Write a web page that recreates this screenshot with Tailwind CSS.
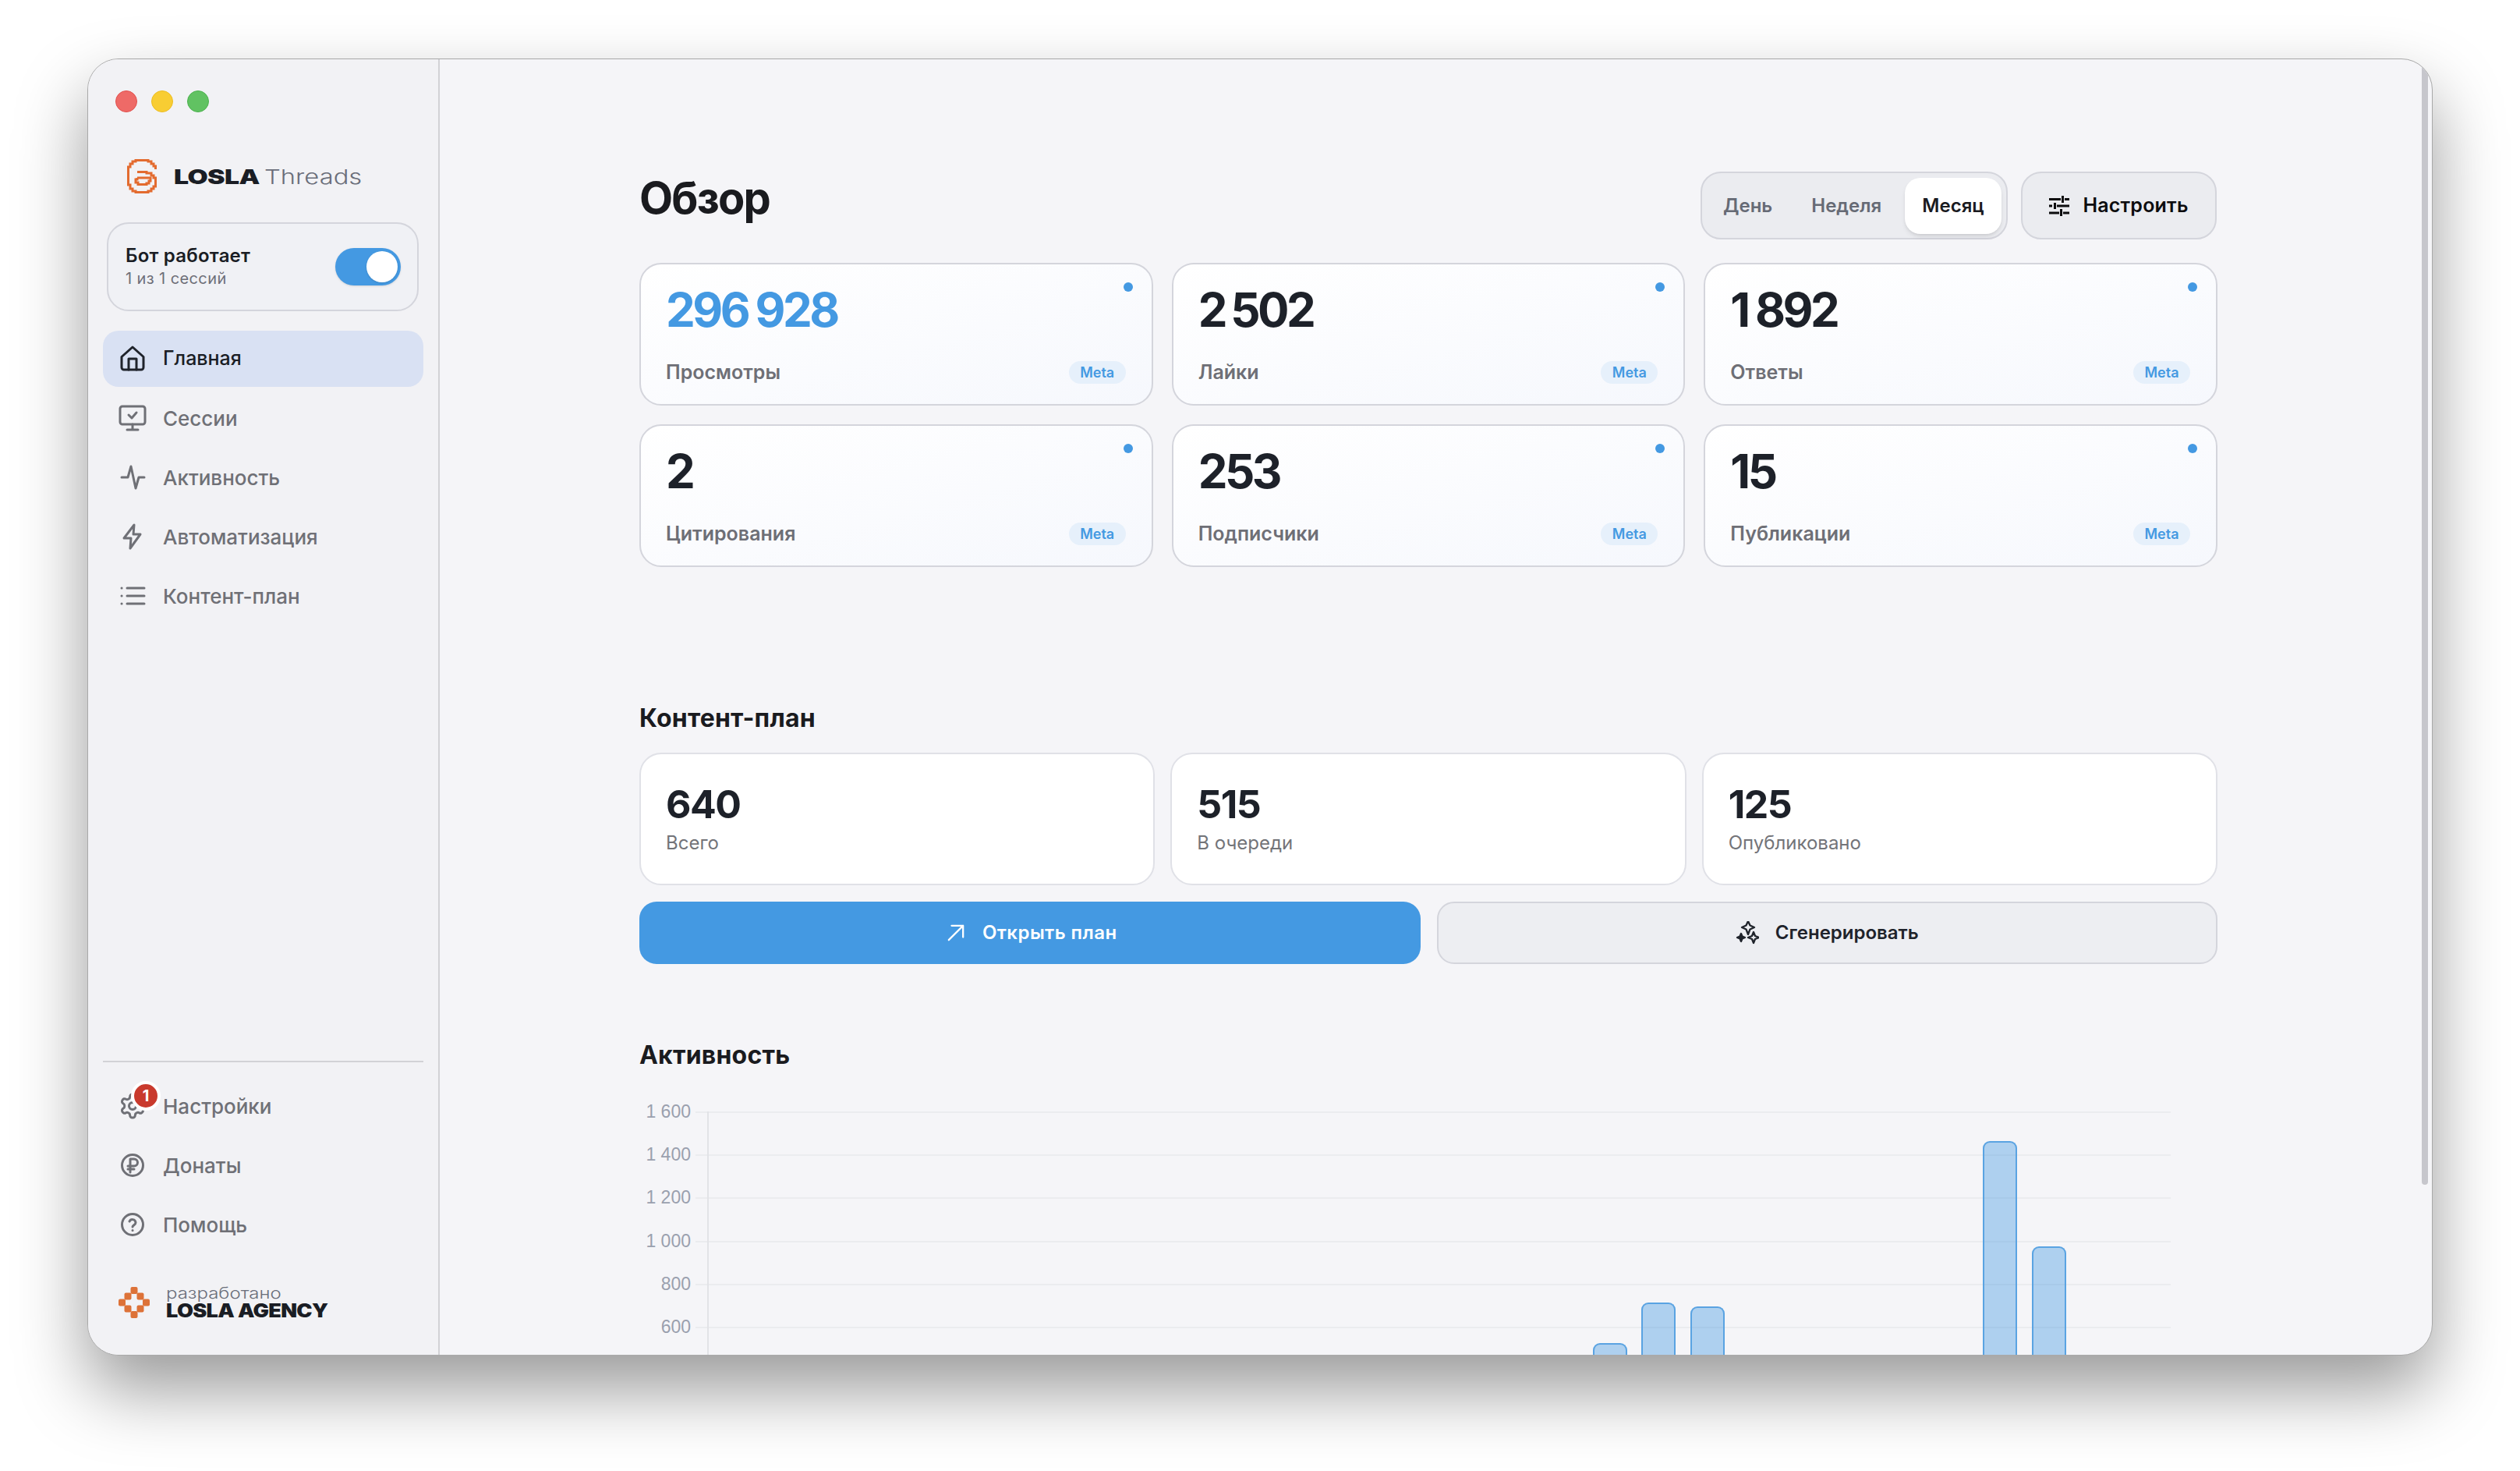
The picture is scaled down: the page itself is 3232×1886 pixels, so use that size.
<!DOCTYPE html>
<html lang="ru">
<head>
    <meta charset="UTF-8">
    <title>LOSLA Threads</title>
    <script src="https://cdn.jsdelivr.net/npm/@tailwindcss/browser@4"></script>
</head>
<body class="bg-white font-['Inter',sans-serif] antialiased overflow-hidden">
<div class="w-[3232px] h-[1886px] pt-[75px] pl-[112px]">
    <!-- Window -->
    <div class="relative w-[3008px] h-[1663px] rounded-[40px] overflow-hidden border border-[#a9a9a9] bg-[#f5f5f8] flex shadow-[0_44px_90px_0_rgba(0,0,0,0.4)]">

        <!-- Sidebar -->
        <aside class="w-[451px] shrink-0 h-full bg-[#f2f2f5] border-r-2 border-[#d2d2d6] px-[19px] flex flex-col">
            <div class="flex gap-[18px] pt-[40px] pl-[16px]">
                <span class="w-[28px] h-[28px] rounded-full bg-[#ee6a67] border border-[#e2514e]"></span>
                <span class="w-[28px] h-[28px] rounded-full bg-[#f8cd33] border border-[#edbd22]"></span>
                <span class="w-[28px] h-[28px] rounded-full bg-[#61c262] border border-[#4db24f]"></span>
            </div>

            <!-- Logo -->
            <div class="flex items-center mt-[60px] pl-[31px] h-[44px]">
                <svg class="w-[38px] h-[44px] shrink-0" viewBox="0 0 38 44" fill="none" stroke="#e36b2f" stroke-width="3">
                    <path d="M36.500 13V9H34V6H31V3H27V1.500H11V3H7V6H4V10H1.500V33H4V38H7V41H11V42.500H27V41H31V38H34V35H36.500V24H34V21H31V18H25V16.500H13"/>
                    <path d="M13 24H30V28H28V31H25V32.500H14V30H11V26H13V24"/>
                </svg>
                <span class="ml-[22px] w-[85px] font-black text-[26px] leading-none text-[#1a1d24] tracking-[-0.5px] origin-left scale-x-[1.3] inline-block pt-[1px]">LOSLA</span>
                <span class="ml-[31px] font-light text-[26px] leading-none text-[#6a6e7a] origin-left scale-x-[1.26] inline-block pt-[2px]">Threads</span>
            </div>

            <!-- Bot status -->
            <div class="mt-[37px] ml-[5px] w-[400px] h-[114px] rounded-[28px] border-2 border-[#d4d5dc] bg-[#f0f1f5] flex items-center justify-between pl-[22px] pr-[21px]">
                <div>
                    <div class="text-[24px] leading-[28px] font-semibold tracking-[0.2px] text-[#1a1d24]">Бот работает</div>
                    <div class="text-[20px] leading-[26px] tracking-[0.4px] text-[#6e6f78] mt-[2px]">1 из 1 сессий</div>
                </div>
                <div class="relative w-[84px] h-[48px] rounded-full bg-[#4499e2] shadow-sm">
                    <span class="absolute right-[4px] top-[4px] w-[40px] h-[40px] rounded-full bg-white shadow"></span>
                </div>
            </div>

            <!-- Navigation -->
            <nav class="mt-[25px] flex flex-col gap-[4px] text-[26px] font-medium text-[#6f7076]">
                <a class="h-[72px] rounded-[20px] bg-[#d9e1f3] text-[#1a1d24] text-[25px] flex items-center gap-[21px] pl-[20px]">
                    <svg class="w-[36px] h-[36px]" viewBox="0 0 36 36" fill="none" stroke="#1f232b" stroke-width="3" stroke-linejoin="round" stroke-linecap="round">
                        <path d="M4 15.500 18 3l14 12.500V29a3 3 0 0 1-3 3H7a3 3 0 0 1-3-3Z"/><path d="M13 32V18h10v14"/>
                    </svg>
                    Главная
                </a>
                <a class="h-[72px] flex items-center gap-[21px] pl-[20px]">
                    <svg class="w-[36px] h-[36px]" viewBox="0 0 36 36" fill="none" stroke="#6f7076" stroke-width="3" stroke-linejoin="round" stroke-linecap="round">
                        <rect x="2" y="3" width="32" height="23" rx="3"/><path d="M18 26v6M11 33h14M13 14l4 4 6-7"/>
                    </svg>
                    Сессии
                </a>
                <a class="h-[72px] flex items-center gap-[21px] pl-[20px]">
                    <svg class="w-[36px] h-[36px]" viewBox="0 0 36 36" fill="none" stroke="#6f7076" stroke-width="3" stroke-linejoin="round" stroke-linecap="round">
                        <path d="M4 18h8l4-14 6 28 4-14h7"/>
                    </svg>
                    Активность
                </a>
                <a class="h-[72px] flex items-center gap-[21px] pl-[20px]">
                    <svg class="w-[36px] h-[36px]" viewBox="0 0 36 36" fill="none" stroke="#6f7076" stroke-width="3" stroke-linejoin="round" stroke-linecap="round">
                        <path d="M20 3 7 20h9l-1 13 13-18h-9Z"/>
                    </svg>
                    Автоматизация
                </a>
                <a class="h-[72px] flex items-center gap-[21px] pl-[20px]">
                    <svg class="w-[36px] h-[36px]" viewBox="0 0 36 36" fill="none" stroke="#6f7076" stroke-width="3" stroke-linecap="round">
                        <path d="M11 8h22M11 18h22M11 28h22"/><path d="M4 8h.1M4 18h.1M4 28h.1"/>
                    </svg>
                    Контент-план
                </a>
            </nav>

            <!-- Bottom navigation -->
            <div class="mt-auto border-t-2 border-[#d2d2d6] pt-[20px] flex flex-col gap-[4px] text-[26px] font-medium text-[#6f7076]">
                <a class="relative h-[72px] flex items-center gap-[21px] pl-[20px]">
                    <svg class="w-[36px] h-[36px]" viewBox="0 0 24 24" fill="none" stroke="#6f7076" stroke-width="2" stroke-linecap="round" stroke-linejoin="round">
                        <path d="M12.220 2h-.44a2 2 0 0 0-2 2v.18a2 2 0 0 1-1 1.730l-.43.25a2 2 0 0 1-2 0l-.15-.08a2 2 0 0 0-2.730.73l-.22.38a2 2 0 0 0 .73 2.730l.15.1a2 2 0 0 1 1 1.720v.51a2 2 0 0 1-1 1.740l-.15.09a2 2 0 0 0-.73 2.730l.22.38a2 2 0 0 0 2.730.73l.15-.08a2 2 0 0 1 2 0l.43.25a2 2 0 0 1 1 1.730V20a2 2 0 0 0 2 2h.44a2 2 0 0 0 2-2v-.18a2 2 0 0 1 1-1.730l.43-.25a2 2 0 0 1 2 0l.15.08a2 2 0 0 0 2.730-.73l.22-.39a2 2 0 0 0-.73-2.730l-.15-.08a2 2 0 0 1-1-1.740v-.5a2 2 0 0 1 1-1.740l.15-.09a2 2 0 0 0 .73-2.730l-.22-.38a2 2 0 0 0-2.730-.73l-.15.08a2 2 0 0 1-2 0l-.43-.25a2 2 0 0 1-1-1.730V4a2 2 0 0 0-2-2z"/><circle cx="12" cy="12" r="3"/>
                    </svg>
                    Настройки
                    <span class="absolute left-[36px] top-[4px] w-[38px] h-[38px] rounded-full bg-[#c93a2d] border-4 border-white flex items-center justify-center text-white text-[20px] font-bold leading-none">1</span>
                </a>
                <a class="h-[72px] flex items-center gap-[21px] pl-[20px]">
                    <svg class="w-[36px] h-[36px]" viewBox="0 0 36 36" fill="none" stroke="#6f7076" stroke-width="3" stroke-linecap="round" stroke-linejoin="round">
                        <circle cx="18" cy="18" r="13.500"/><path d="M15 27V10h5a4.500 4.500 0 0 1 0 9h-8M12 23h8"/>
                    </svg>
                    Донаты
                </a>
                <a class="h-[72px] flex items-center gap-[21px] pl-[20px]">
                    <svg class="w-[36px] h-[36px]" viewBox="0 0 36 36" fill="none" stroke="#6f7076" stroke-width="3" stroke-linecap="round" stroke-linejoin="round">
                        <circle cx="18" cy="18" r="13.500"/><path d="M14 14a4.200 4.200 0 0 1 8 1.400c0 2.800-4 3.600-4 5.600M18 25.500h.1"/>
                    </svg>
                    Помощь
                </a>
            </div>

            <!-- Agency mark -->
            <div class="flex items-center mt-[44px] mb-[47px] pl-[20px] h-[40px]">
                <svg class="w-[40px] h-[40px] shrink-0" viewBox="0 0 40 40" fill="#dd7238">
                    <rect x="15.500" y="0" width="9" height="9" rx="2"/><rect x="7.500" y="7.500" width="9" height="9" rx="2"/><rect x="23.500" y="7.500" width="9" height="9" rx="2"/>
                    <rect x="0" y="15.500" width="9" height="9" rx="2"/><rect x="31" y="15.500" width="9" height="9" rx="2"/>
                    <rect x="7.500" y="23.500" width="9" height="9" rx="2"/><rect x="23.500" y="23.500" width="9" height="9" rx="2"/><rect x="15.500" y="31" width="9" height="9" rx="2"/>
                </svg>
                <div class="ml-[21px]">
                    <div class="text-[20px] leading-[21px] font-light text-[#6a6e7a] origin-left scale-x-[1.2] w-[122px] whitespace-nowrap">разработано</div>
                    <div class="text-[24px] leading-[24px] font-black text-[#1a1d24] origin-left scale-x-[1.13] tracking-[-0.6px] w-[185px] whitespace-nowrap">LOSLA AGENCY</div>
                </div>
            </div>
        </aside>

        <!-- Main -->
        <main class="flex-1 h-full overflow-hidden pl-[256px] pt-[144px]">
            <div class="w-[2024px]">
                <header class="flex items-start justify-between h-[87px] pr-[1px]">
                    <h1 class="text-[56px] leading-[68px] font-bold tracking-[-1.8px] text-[#1a1b1f]">Обзор</h1>
                    <div class="flex gap-[17px]">
                        <div class="w-[394px] h-[87px] rounded-[26px] border-2 border-[#d4d5dc] bg-[#ebecf0] flex items-center pl-[27px] pr-[6px] text-[24px] font-semibold text-[#666a75]">
                            <span>День</span>
                            <span class="ml-[50px]">Неделя</span>
                            <span class="ml-auto w-[124px] h-[72px] rounded-[20px] bg-white text-[#1a1b1f] shadow-md flex items-center justify-center">Месяц</span>
                        </div>
                        <button class="w-[251px] h-[87px] rounded-[26px] border-2 border-[#d4d5dc] bg-[#ebecf0] flex items-center justify-center gap-[17px] text-[25px] font-semibold tracking-[0.2px] text-[#0d0d0f]">
                            <svg class="w-[26px] h-[26px]" viewBox="0 0 26 26" fill="none" stroke="#0d0d0f" stroke-width="3">
                                <path d="M0 4.500h15M20 4.500h6M17.500 0v9M0 13h4M10 13h16M7.500 9v8M0 22h13M18 22h8M15.500 17v9"/>
                            </svg>
                            Настроить
                        </button>
                    </div>
                </header>

                <!-- Metrics -->
                <section class="mt-[30px] grid grid-cols-3 gap-x-[24px] gap-y-[24px]">
                    <div class="relative h-[183px] rounded-[28px] border-2 border-[#d4d5dc] bg-linear-to-br from-white to-[#f6f8fd] pl-[32px] pr-[33px] pt-[22px]">
                        <span class="absolute right-[24px] top-[23px] w-[12px] h-[12px] rounded-full bg-[#4499e2]"></span>
                        <div class="text-[60px] leading-[72px] font-bold tracking-[-3.5px] text-[#4499e2]">296&#8202;<span class="ml-[8px]">928</span></div>
                        <div class="mt-[26px] flex items-center justify-between">
                            <span class="text-[25px] font-semibold text-[#6e6f76]">Просмотры</span>
                            <span class="w-[73px] h-[29px] rounded-full bg-[#e6f0fb] flex items-center justify-center text-[18px] font-semibold text-[#4499e2]">Meta</span>
                        </div>
                    </div>
                    <div class="relative h-[183px] rounded-[28px] border-2 border-[#d4d5dc] bg-linear-to-br from-white to-[#f6f8fd] pl-[32px] pr-[33px] pt-[22px]">
                        <span class="absolute right-[24px] top-[23px] w-[12px] h-[12px] rounded-full bg-[#4499e2]"></span>
                        <div class="text-[60px] leading-[72px] font-bold tracking-[-3.5px] text-[#1d2129]">2&#8202;<span class="ml-[6px]">502</span></div>
                        <div class="mt-[26px] flex items-center justify-between">
                            <span class="text-[25px] font-semibold text-[#6e6f76]">Лайки</span>
                            <span class="w-[73px] h-[29px] rounded-full bg-[#e6f0fb] flex items-center justify-center text-[18px] font-semibold text-[#4499e2]">Meta</span>
                        </div>
                    </div>
                    <div class="relative h-[183px] rounded-[28px] border-2 border-[#d4d5dc] bg-linear-to-br from-white to-[#f6f8fd] pl-[32px] pr-[33px] pt-[22px]">
                        <span class="absolute right-[24px] top-[23px] w-[12px] h-[12px] rounded-full bg-[#4499e2]"></span>
                        <div class="text-[60px] leading-[72px] font-bold tracking-[-3.5px] text-[#1d2129]">1&#8202;<span class="ml-[8px]">892</span></div>
                        <div class="mt-[26px] flex items-center justify-between">
                            <span class="text-[25px] font-semibold text-[#6e6f76]">Ответы</span>
                            <span class="w-[73px] h-[29px] rounded-full bg-[#e6f0fb] flex items-center justify-center text-[18px] font-semibold text-[#4499e2]">Meta</span>
                        </div>
                    </div>
                    <div class="relative h-[183px] rounded-[28px] border-2 border-[#d4d5dc] bg-linear-to-br from-white to-[#f6f8fd] pl-[32px] pr-[33px] pt-[22px]">
                        <span class="absolute right-[24px] top-[23px] w-[12px] h-[12px] rounded-full bg-[#4499e2]"></span>
                        <div class="text-[60px] leading-[72px] font-bold tracking-[-3.5px] text-[#1d2129]">2</div>
                        <div class="mt-[26px] flex items-center justify-between">
                            <span class="text-[25px] font-semibold text-[#6e6f76]">Цитирования</span>
                            <span class="w-[73px] h-[29px] rounded-full bg-[#e6f0fb] flex items-center justify-center text-[18px] font-semibold text-[#4499e2]">Meta</span>
                        </div>
                    </div>
                    <div class="relative h-[183px] rounded-[28px] border-2 border-[#d4d5dc] bg-linear-to-br from-white to-[#f6f8fd] pl-[32px] pr-[33px] pt-[22px]">
                        <span class="absolute right-[24px] top-[23px] w-[12px] h-[12px] rounded-full bg-[#4499e2]"></span>
                        <div class="text-[60px] leading-[72px] font-bold tracking-[-3.5px] text-[#1d2129]">253</div>
                        <div class="mt-[26px] flex items-center justify-between">
                            <span class="text-[25px] font-semibold text-[#6e6f76]">Подписчики</span>
                            <span class="w-[73px] h-[29px] rounded-full bg-[#e6f0fb] flex items-center justify-center text-[18px] font-semibold text-[#4499e2]">Meta</span>
                        </div>
                    </div>
                    <div class="relative h-[183px] rounded-[28px] border-2 border-[#d4d5dc] bg-linear-to-br from-white to-[#f6f8fd] pl-[32px] pr-[33px] pt-[22px]">
                        <span class="absolute right-[24px] top-[23px] w-[12px] h-[12px] rounded-full bg-[#4499e2]"></span>
                        <div class="text-[60px] leading-[72px] font-bold tracking-[-3.5px] text-[#1d2129]">15</div>
                        <div class="mt-[26px] flex items-center justify-between">
                            <span class="text-[25px] font-semibold text-[#6e6f76]">Публикации</span>
                            <span class="w-[73px] h-[29px] rounded-full bg-[#e6f0fb] flex items-center justify-center text-[18px] font-semibold text-[#4499e2]">Meta</span>
                        </div>
                    </div>
                </section>

                <!-- Content plan -->
                <h2 class="mt-[174px] text-[32px] leading-[40px] font-bold tracking-[0.2px] text-[#1a1b1f]">Контент-план</h2>
                <section class="mt-[24px] grid grid-cols-3 gap-[20px]">
                    <div class="h-[170px] rounded-[28px] border-2 border-[#e0e1e7] bg-white pl-[32px] pt-[34px]">
                        <div class="text-[50px] leading-[60px] font-bold tracking-[-1.5px] text-[#1d2129]">640</div>
                        <div class="mt-[4px] text-[24px] leading-[32px] text-[#737479]">Всего</div>
                    </div>
                    <div class="h-[170px] rounded-[28px] border-2 border-[#e0e1e7] bg-white pl-[32px] pt-[34px]">
                        <div class="text-[50px] leading-[60px] font-bold tracking-[-1.5px] text-[#1d2129]">515</div>
                        <div class="mt-[4px] text-[24px] leading-[32px] text-[#737479]">В очереди</div>
                    </div>
                    <div class="h-[170px] rounded-[28px] border-2 border-[#e0e1e7] bg-white pl-[32px] pt-[34px]">
                        <div class="text-[50px] leading-[60px] font-bold tracking-[-1.5px] text-[#1d2129]">125</div>
                        <div class="mt-[4px] text-[24px] leading-[32px] text-[#737479]">Опубликовано</div>
                    </div>
                </section>
                <div class="mt-[21px] grid grid-cols-2 gap-[21px]">
                    <button class="h-[80px] rounded-[22px] bg-[#4499e2] pl-[6px] text-white text-[24px] font-semibold tracking-[0.45px] flex items-center justify-center gap-[23px]">
                        <svg class="w-[22px] h-[22px]" viewBox="0 0 24 24" fill="none" stroke="white" stroke-width="2.500" stroke-linecap="round" stroke-linejoin="round">
                            <path d="M2 22 22 2M6 2h16v16"/>
                        </svg>
                        Открыть план
                    </button>
                    <button class="h-[80px] rounded-[22px] border-2 border-[#d4d5dc] bg-[#edeef2] text-[#1f232b] text-[24px] font-semibold flex items-center justify-center gap-[21px]">
                        <svg class="w-[30px] h-[30px]" viewBox="0 0 30 30" fill="none" stroke="#1f232b" stroke-width="2.300" stroke-linejoin="round">
                            <path d="M16 0l2.500 5.500L24 8l-5.500 2.500L16 17l-2.500-6.500L8 8l5.500-2.500Z"/>
                            <path d="M23 14l2 5 5 2-5 2-2 5-2-5-5-2 5-2Z"/>
                            <path d="M7 16l1.500 3.500L12 21l-3.500 1.500L7 26l-1.500-3.500L2 21l3.500-1.500Z" fill="#1f232b"/>
                        </svg>
                        Сгенерировать
                    </button>
                </div>

                <!-- Activity chart -->
                <h2 class="mt-[97px] text-[32px] leading-[40px] font-bold tracking-[0.2px] text-[#1a1b1f]">Активность</h2>
                <div class="relative mt-[52px] font-['Liberation_Sans',sans-serif] text-[23px] text-[#9aa0ae]">
                    <div class="flex h-[55.2px] items-start"><span class="w-[66px] text-right leading-[26px] -mt-[13px] whitespace-nowrap">1 600</span><span class="ml-[6px] w-[1892px] h-[2px] bg-[#ebecef]"></span></div>
                    <div class="flex h-[55.2px] items-start"><span class="w-[66px] text-right leading-[26px] -mt-[13px] whitespace-nowrap">1 400</span><span class="ml-[6px] w-[1892px] h-[2px] bg-[#ebecef]"></span></div>
                    <div class="flex h-[55.2px] items-start"><span class="w-[66px] text-right leading-[26px] -mt-[13px] whitespace-nowrap">1 200</span><span class="ml-[6px] w-[1892px] h-[2px] bg-[#ebecef]"></span></div>
                    <div class="flex h-[55.2px] items-start"><span class="w-[66px] text-right leading-[26px] -mt-[13px] whitespace-nowrap">1 000</span><span class="ml-[6px] w-[1892px] h-[2px] bg-[#ebecef]"></span></div>
                    <div class="flex h-[55.2px] items-start"><span class="w-[66px] text-right leading-[26px] -mt-[13px] whitespace-nowrap">800</span><span class="ml-[6px] w-[1892px] h-[2px] bg-[#ebecef]"></span></div>
                    <div class="flex h-[55.2px] items-start"><span class="w-[66px] text-right leading-[26px] -mt-[13px] whitespace-nowrap">600</span><span class="ml-[6px] w-[1892px] h-[2px] bg-[#ebecef]"></span></div>
                    <!-- y axis and bars sit over the grid -->
                    <span class="absolute left-[87px] top-0 w-[2px] h-[442px] bg-[#e2e3e7]"></span>
                    <div class="absolute left-[88px] top-0 w-[1876px] h-[442px] grid grid-cols-[repeat(30,1fr)] items-end">
                        <span class="col-start-19 row-start-1 justify-self-center w-[44px] h-[145px] rounded-t-[9px] border-2 border-b-0 border-[#5aa3e2] bg-[#4499e2]/40"></span>
                        <span class="col-start-20 row-start-1 justify-self-center w-[44px] h-[197px] rounded-t-[9px] border-2 border-b-0 border-[#5aa3e2] bg-[#4499e2]/40"></span>
                        <span class="col-start-21 row-start-1 justify-self-center w-[44px] h-[192px] rounded-t-[9px] border-2 border-b-0 border-[#5aa3e2] bg-[#4499e2]/40"></span>
                        <span class="col-start-27 row-start-1 justify-self-center w-[44px] h-[404px] rounded-t-[9px] border-2 border-b-0 border-[#5aa3e2] bg-[#4499e2]/40"></span>
                        <span class="col-start-28 row-start-1 justify-self-center w-[44px] h-[269px] rounded-t-[9px] border-2 border-b-0 border-[#5aa3e2] bg-[#4499e2]/40"></span>
                    </div>
                </div>
            </div>
        </main>

        <!-- Scrollbar thumb -->
        <span class="absolute right-[5px] top-[7px] w-[8px] h-[1436px] rounded-full bg-[#c6c6cc]"></span>
    </div>
</div>
</body>
</html>
